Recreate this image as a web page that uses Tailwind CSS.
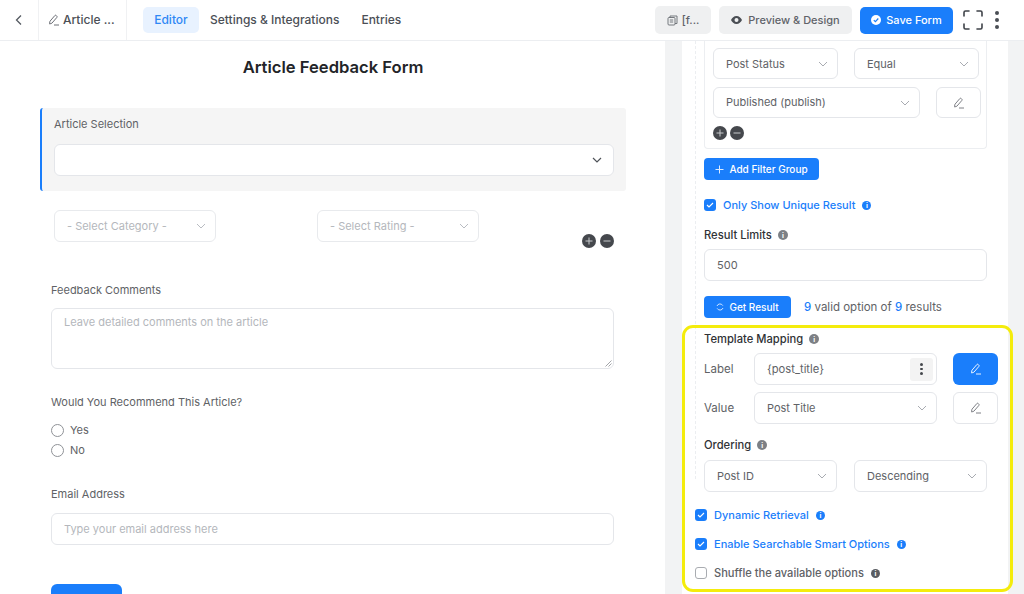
<!DOCTYPE html>
<html lang="en">
<head>
    <meta charset="UTF-8">
    <title>Article Feedback Form</title>
    <script src="https://cdn.jsdelivr.net/npm/@tailwindcss/browser@4"></script>
</head>
<body class="bg-white font-['Inter',sans-serif] text-[#606266] text-[11px] overflow-hidden">
<div class="relative w-[1024px] h-[594px] overflow-hidden">

    <!-- top bar -->
    <header class="h-[41px] flex items-center border-b border-[#eceef1] bg-white">
        <div class="w-[39px] h-full flex items-center justify-center border-r border-[#f0f1f3]">
            <svg class="w-[12px] h-[12px]" viewBox="0 0 12 12" fill="none" stroke="#555a61" stroke-width="1.3"><path d="M8 1.5 3.500 6 8 10.500"/></svg>
        </div>
        <div class="w-[88px] h-full flex items-center pl-[9px] gap-[3px] border-r border-[#f0f1f3] text-[12px] font-medium text-[#4b4f56]">
            <svg class="w-[12px] h-[12px]" viewBox="0 0 12 12" fill="none" stroke="#5c6068" stroke-width="0.9"><path d="M1.500 9.500 2 7.200 6.800 1.600a1 1 0 0 1 1.500 0l.5.5a1 1 0 0 1 0 1.400L3.900 9.200 1.600 10zM6 11h5"/></svg>
            <span>Article ...</span>
        </div>
        <div class="ml-[16px] flex items-center text-[#4b4f56] text-[12px] font-medium">
            <span class="h-[26px] w-[56px] flex items-center justify-center rounded-[5px] bg-[#e8f2ff] text-[#2f88f5]">Editor</span>
            <span class="ml-[11px]">Settings &amp; Integrations</span>
            <span class="ml-[22px]">Entries</span>
        </div>
        <div class="ml-auto flex items-center">
            <span class="w-[56px] h-[28px] rounded-[5px] bg-[#eff0f1] flex items-center justify-center gap-[4px] text-[#5f6369] text-[11px] font-medium">
                <svg class="w-[11px] h-[11px]" viewBox="0 0 11 11" fill="none" stroke="#686c72" stroke-width="0.9"><rect x="1" y="2.500" width="7" height="7.500" rx="1"/><path d="M3 2.500V1h7v7.500H8M2.800 5h3.400M2.800 7h3.400"/></svg>
                <span>[f...</span>
            </span>
            <span class="ml-[8px] w-[133px] h-[28px] rounded-[5px] bg-[#eff0f1] flex items-center justify-center gap-[6px] text-[#5f6369] font-medium text-[11px]">
                <svg class="w-[11px] h-[8px]" viewBox="0 0 11 8"><path fill="#4a4e54" fill-rule="evenodd" d="M5.500 0C8 0 10 1.800 11 4 10 6.200 8 8 5.500 8S1 6.200 0 4C1 1.800 3 0 5.500 0Zm0 2a2 2 0 1 0 0 4 2 2 0 0 0 0-4Z"/></svg>
                <span>Preview &amp; Design</span>
            </span>
            <span class="ml-[8px] w-[93px] h-[27px] rounded-[5px] bg-[#1a7efb] flex items-center justify-center gap-[5px] text-white font-medium text-[11px]">
                <svg class="w-[10px] h-[10px]" viewBox="0 0 10 10"><circle cx="5" cy="5" r="5" fill="#fff"/><path d="M2.800 5.100 4.400 6.600 7.300 3.500" fill="none" stroke="#1a7efb" stroke-width="1.200"/></svg>
                <span>Save Form</span>
            </span>
            <svg class="ml-[10px] w-[20px] h-[20px]" viewBox="0 0 20 20" fill="none" stroke="#3f4349" stroke-width="1.600" stroke-linecap="round"><path d="M1 6V2.500A1.500 1.500 0 0 1 2.500 1H6M14 1h3.500A1.500 1.500 0 0 1 19 2.500V6M19 14v3.500a1.500 1.500 0 0 1-1.500 1.500H14M6 19H2.500A1.500 1.500 0 0 1 1 17.500V14"/></svg>
            <span class="ml-[12px] mr-[25px] flex flex-col gap-[3px]">
                <i class="block w-[4px] h-[4px] rounded-full bg-[#4a4e54]"></i>
                <i class="block w-[4px] h-[4px] rounded-full bg-[#4a4e54]"></i>
                <i class="block w-[4px] h-[4px] rounded-full bg-[#4a4e54]"></i>
            </span>
        </div>
    </header>

    <div class="flex h-[553px]">
        <!-- form canvas -->
        <main class="w-[665px] shrink-0 pl-[51px] pr-[51px]">
            <h1 class="mt-[13px] h-[27px] leading-[27px] text-center text-[16.600px] font-semibold text-[#222428] ml-[-18px] w-[600px]">Article Feedback Form</h1>

            <section class="mt-[27px] ml-[-11px] w-[586px] h-[83px] bg-[#f5f5f5] border-l-2 border-[#1a7efb] rounded-[3px] pl-[12px] pr-[12px] pt-[9px]">
                <div class="h-[15px] leading-[15px]">Article Selection</div>
                <div class="mt-[12px] h-[32px] bg-white border border-[#e4e6ea] rounded-[6px] flex items-center justify-end pr-[11px]">
                    <svg class="w-[10px] h-[6px]" viewBox="0 0 10 6" fill="none" stroke="#4f5359" stroke-width="1.200"><path d="M1 1 5 5 9 1"/></svg>
                </div>
            </section>

            <div class="relative mt-[19px] flex h-[32px] pl-[3px]">
                <div class="w-[162px] h-[32px] border border-[#e8eaed] rounded-[6px] flex items-center justify-between pl-[12px] pr-[9px] text-[#b4b7bc]">
                    <span>- Select Category -</span>
                    <svg class="w-[10px] h-[6px]" viewBox="0 0 10 6" fill="none" stroke="#b9bcc2"><path d="M1 1 5 5 9 1"/></svg>
                </div>
                <div class="ml-[101px] w-[162px] h-[32px] border border-[#e8eaed] rounded-[6px] flex items-center justify-between pl-[12px] pr-[9px] text-[#b4b7bc]">
                    <span>- Select Rating -</span>
                    <svg class="w-[10px] h-[6px]" viewBox="0 0 10 6" fill="none" stroke="#b9bcc2"><path d="M1 1 5 5 9 1"/></svg>
                </div>
                <div class="ml-auto mt-[24px] flex gap-[4px] h-[14px]">
                    <svg class="w-[14px] h-[14px]" viewBox="0 0 14 14"><circle cx="7" cy="7" r="7" fill="#45484d"/><path d="M3.500 7h7M7 3.500v7" stroke="#c9cbce"/></svg>
                    <svg class="w-[14px] h-[14px]" viewBox="0 0 14 14"><circle cx="7" cy="7" r="7" fill="#45484d"/><path d="M3.500 7h7" stroke="#c9cbce"/></svg>
                </div>
            </div>

            <div class="mt-[41px] h-[15px] leading-[15px]">Feedback Comments</div>
            <div class="relative mt-[10px] h-[61px] border border-[#e4e6ea] rounded-[6px] px-[12px] pt-[6px] text-[#b4b7bc] leading-[15px]">
                Leave detailed comments on the article
                <svg class="absolute right-[1px] bottom-[1px] w-[7px] h-[7px]" viewBox="0 0 7 7" stroke="#8b8e93" stroke-width="0.8"><path d="M0.500 6.500 6.500 0.500M3.500 6.500 6.500 3.500"/></svg>
            </div>

            <div class="mt-[26px] h-[15px] leading-[15px]">Would You Recommend This Article?</div>
            <div class="mt-[13px] flex items-center h-[14px]">
                <i class="block w-[13px] h-[13px] rounded-full border border-[#8f9297]"></i>
                <span class="ml-[6px]">Yes</span>
            </div>
            <div class="mt-[6px] flex items-center h-[14px]">
                <i class="block w-[13px] h-[13px] rounded-full border border-[#8f9297]"></i>
                <span class="ml-[6px]">No</span>
            </div>

            <div class="mt-[30px] h-[15px] leading-[15px]">Email Address</div>
            <div class="mt-[11px] h-[32px] border border-[#e4e6ea] rounded-[6px] pl-[12px] flex items-center text-[#b4b7bc]">Type your email address here</div>

            <div class="mt-[39px] w-[71px] h-[30px] bg-[#1a7efb] rounded-[6px]"></div>
        </main>

        <!-- settings panel -->
        <aside class="flex-1 bg-[#f2f3f4] pl-[17px] pr-[16px]">
            <div class="h-full bg-white pl-[13px] relative">
                <div class="absolute left-[13px] top-0 h-[438px] border-l border-dashed border-[#eceef1]"></div>
                <div class="pl-[9px]">
                    <div class="w-[283px] h-[108px] border border-[#eceef1] border-t-0 rounded-b-[4px] pl-[8px]">
                        <div class="pt-[7px] flex gap-[16px]">
                            <div class="w-[125px] h-[31px] border border-[#e4e6ea] rounded-[6px] flex items-center justify-between pl-[12px] pr-[9px]">
                                <span class="pt-[1px]">Post Status</span>
                                <svg class="w-[10px] h-[6px]" viewBox="0 0 10 6" fill="none" stroke="#a8abb1"><path d="M1 1 5 5 9 1"/></svg>
                            </div>
                            <div class="w-[125px] h-[31px] border border-[#e4e6ea] rounded-[6px] flex items-center justify-between pl-[12px] pr-[9px]">
                                <span class="pt-[1px]">Equal</span>
                                <svg class="w-[10px] h-[6px]" viewBox="0 0 10 6" fill="none" stroke="#a8abb1"><path d="M1 1 5 5 9 1"/></svg>
                            </div>
                        </div>
                        <div class="mt-[8px] flex gap-[16px]">
                            <div class="w-[207px] h-[31px] border border-[#e4e6ea] rounded-[6px] flex items-center justify-between pl-[12px] pr-[9px]">
                                <span>Published (publish)</span>
                                <svg class="w-[10px] h-[6px]" viewBox="0 0 10 6" fill="none" stroke="#a8abb1"><path d="M1 1 5 5 9 1"/></svg>
                            </div>
                            <div class="w-[45px] h-[31px] border border-[#e4e6ea] rounded-[6px] flex items-center justify-center">
                                <svg class="w-[12px] h-[12px]" viewBox="0 0 12 12" fill="none" stroke="#6f7278" stroke-width="0.9"><path d="M1.500 9.500 2 7.200 6.800 1.600a1 1 0 0 1 1.500 0l.5.5a1 1 0 0 1 0 1.400L3.900 9.200 1.600 10zM6 11h5"/></svg>
                            </div>
                        </div>
                        <div class="mt-[8px] flex gap-[3px]">
                            <svg class="w-[14px] h-[14px]" viewBox="0 0 14 14"><circle cx="7" cy="7" r="7" fill="#45484d"/><path d="M3.500 7h7M7 3.500v7" stroke="#c9cbce"/></svg>
                            <svg class="w-[14px] h-[14px]" viewBox="0 0 14 14"><circle cx="7" cy="7" r="7" fill="#45484d"/><path d="M3.500 7h7" stroke="#c9cbce"/></svg>
                        </div>
                    </div>

                    <div class="mt-[9px] w-[115px] h-[22px] bg-[#1a7efb] rounded-[4px] flex items-center justify-center gap-[5px] text-white text-[10px] font-medium">
                        <svg class="w-[9px] h-[9px]" viewBox="0 0 9 9" stroke="#dcebff"><path d="M0.500 4.500h8M4.500 0.500v8"/></svg>
                        <span>Add Filter Group</span>
                    </div>

                    <div class="mt-[19px] h-[12px] flex items-center">
                        <span class="w-[12px] h-[12px] rounded-[3px] bg-[#1a7efb] flex items-center justify-center">
                            <svg class="w-[8px] h-[6px]" viewBox="0 0 8 6" fill="none" stroke="#fff" stroke-width="1.100"><path d="M1 3 3 5 7 1"/></svg>
                        </span>
                        <span class="ml-[7px] text-[#1a7efb] font-medium">Only Show Unique Result</span>
                        <span class="ml-[7px] w-[9px] h-[9px] rounded-full bg-[#1a7efb] flex items-center justify-center text-white text-[7px] font-bold leading-none">i</span>
                    </div>

                    <div class="mt-[18px] h-[12px] flex items-center text-[#303236] font-medium text-[11.200px]">
                        <span>Result Limits</span>
                        <span class="ml-[6px] w-[10px] h-[10px] rounded-full bg-[#7d8085] flex items-center justify-center text-white text-[7px] font-bold leading-none">i</span>
                    </div>

                    <div class="mt-[8px] w-[283px] h-[32px] border border-[#e4e6ea] rounded-[6px] flex items-center pl-[12px]">500</div>

                    <div class="mt-[15px] h-[22px] flex items-center">
                        <span class="w-[87px] h-[22px] bg-[#1a7efb] rounded-[4px] flex items-center justify-center gap-[5px] text-white text-[10px] font-medium">
                            <svg class="w-[8px] h-[8px]" viewBox="0 0 8 8" fill="none" stroke="#e5f0ff" stroke-width="0.9"><path d="M1 3a3.200 3.200 0 0 1 5.800-.4M7 5a3.200 3.200 0 0 1-5.800.4"/></svg>
                            <span>Get Result</span>
                        </span>
                        <span class="ml-[13px] pt-[1px] text-[11.500px]"><b class="text-[#1a7efb] font-medium">9</b> valid option of <b class="text-[#1a7efb] font-medium">9</b> results</span>
                    </div>

                    <div class="mt-[15px] h-[12px] flex items-center text-[#303236] font-medium text-[11.200px]">
                        <span>Template Mapping</span>
                        <span class="ml-[6px] w-[10px] h-[10px] rounded-full bg-[#7d8085] flex items-center justify-center text-white text-[7px] font-bold leading-none">i</span>
                    </div>

                    <div class="mt-[8px] flex items-center h-[32px]">
                        <span class="w-[50px] pt-[1px] text-[11.500px]">Label</span>
                        <div class="w-[183px] h-[32px] border border-[#e4e6ea] rounded-[6px] flex items-center justify-between pl-[12px] pr-[3px]">
                            <span class="pt-[1px] text-[11.200px]">{post_title}</span>
                            <span class="w-[23px] h-[23px] rounded-[3px] bg-[#f3f3f3] flex flex-col items-center justify-center gap-[2px]">
                                <i class="block w-[2.500px] h-[2.500px] rounded-full bg-[#45484d]"></i>
                                <i class="block w-[2.500px] h-[2.500px] rounded-full bg-[#45484d]"></i>
                                <i class="block w-[2.500px] h-[2.500px] rounded-full bg-[#45484d]"></i>
                            </span>
                        </div>
                        <div class="ml-[16px] w-[45px] h-[32px] bg-[#1a7efb] rounded-[6px] flex items-center justify-center">
                            <svg class="w-[12px] h-[12px]" viewBox="0 0 12 12" fill="none" stroke="#fff" stroke-width="0.9"><path d="M1.500 9.500 2 7.200 6.800 1.600a1 1 0 0 1 1.500 0l.5.5a1 1 0 0 1 0 1.400L3.900 9.200 1.600 10zM6 11h5"/></svg>
                        </div>
                    </div>

                    <div class="mt-[7px] flex items-center h-[32px]">
                        <span class="w-[50px] pt-[1px] text-[11.500px]">Value</span>
                        <div class="w-[183px] h-[32px] border border-[#e4e6ea] rounded-[6px] flex items-center justify-between pl-[12px] pr-[9px]">
                            <span>Post Title</span>
                            <svg class="w-[10px] h-[6px]" viewBox="0 0 10 6" fill="none" stroke="#a8abb1"><path d="M1 1 5 5 9 1"/></svg>
                        </div>
                        <div class="ml-[16px] w-[45px] h-[32px] border border-[#e4e6ea] rounded-[6px] flex items-center justify-center">
                            <svg class="w-[12px] h-[12px]" viewBox="0 0 12 12" fill="none" stroke="#6f7278" stroke-width="0.9"><path d="M1.500 9.500 2 7.200 6.800 1.600a1 1 0 0 1 1.500 0l.5.5a1 1 0 0 1 0 1.400L3.900 9.200 1.600 10zM6 11h5"/></svg>
                        </div>
                    </div>

                    <div class="mt-[15px] h-[12px] flex items-center text-[#303236] font-medium text-[11.200px]">
                        <span>Ordering</span>
                        <span class="ml-[6px] w-[10px] h-[10px] rounded-full bg-[#7d8085] flex items-center justify-center text-white text-[7px] font-bold leading-none">i</span>
                    </div>

                    <div class="mt-[9px] flex gap-[17px]">
                        <div class="w-[133px] h-[32px] border border-[#e4e6ea] rounded-[6px] flex items-center justify-between pl-[12px] pr-[9px]">
                            <span>Post ID</span>
                            <svg class="w-[10px] h-[6px]" viewBox="0 0 10 6" fill="none" stroke="#a8abb1"><path d="M1 1 5 5 9 1"/></svg>
                        </div>
                        <div class="w-[133px] h-[32px] border border-[#e4e6ea] rounded-[6px] flex items-center justify-between pl-[12px] pr-[9px]">
                            <span>Descending</span>
                            <svg class="w-[10px] h-[6px]" viewBox="0 0 10 6" fill="none" stroke="#a8abb1"><path d="M1 1 5 5 9 1"/></svg>
                        </div>
                    </div>
                </div>

                <div class="mt-[17px] h-[12px] flex items-center">
                    <span class="w-[12px] h-[12px] rounded-[3px] bg-[#1a7efb] flex items-center justify-center">
                        <svg class="w-[8px] h-[6px]" viewBox="0 0 8 6" fill="none" stroke="#fff" stroke-width="1.100"><path d="M1 3 3 5 7 1"/></svg>
                    </span>
                    <span class="ml-[7px] text-[#1a7efb] font-medium">Dynamic Retrieval</span>
                    <span class="ml-[7px] w-[9px] h-[9px] rounded-full bg-[#1a7efb] flex items-center justify-center text-white text-[7px] font-bold leading-none">i</span>
                </div>
                <div class="mt-[17px] h-[12px] flex items-center">
                    <span class="w-[12px] h-[12px] rounded-[3px] bg-[#1a7efb] flex items-center justify-center">
                        <svg class="w-[8px] h-[6px]" viewBox="0 0 8 6" fill="none" stroke="#fff" stroke-width="1.100"><path d="M1 3 3 5 7 1"/></svg>
                    </span>
                    <span class="ml-[7px] text-[#1a7efb] font-medium">Enable Searchable Smart Options</span>
                    <span class="ml-[7px] w-[9px] h-[9px] rounded-full bg-[#1a7efb] flex items-center justify-center text-white text-[7px] font-bold leading-none">i</span>
                </div>
                <div class="mt-[17px] h-[12px] flex items-center">
                    <span class="w-[12px] h-[12px] rounded-[3px] border border-[#a9acb1] bg-white"></span>
                    <span class="ml-[7px] font-medium text-[11.100px]">Shuffle the available options</span>
                    <span class="ml-[7px] w-[9px] h-[9px] rounded-full bg-[#5a5d62] flex items-center justify-center text-white text-[7px] font-bold leading-none">i</span>
                </div>
            </div>
        </aside>
    </div>

    <!-- yellow highlight over the panel -->
    <div class="absolute left-[682px] top-[325px] w-[331px] h-[267px] border-[3.500px] border-[#f4ec0c] rounded-[11px] pointer-events-none"></div>
</div>
</body>
</html>
